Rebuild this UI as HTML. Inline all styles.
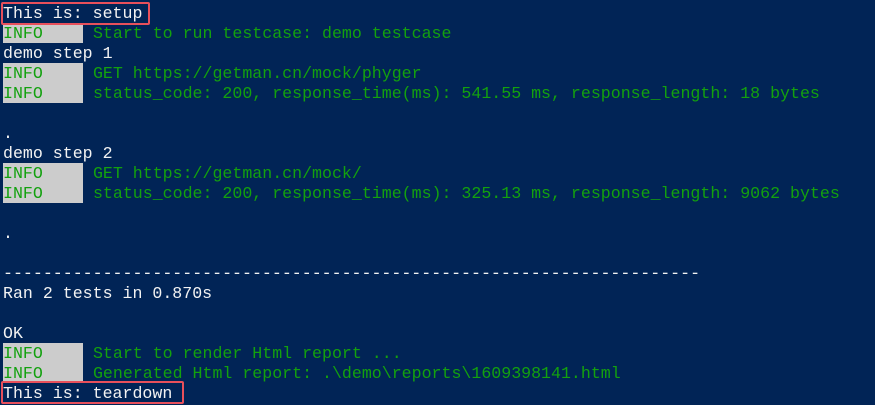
<!DOCTYPE html>
<html><head><meta charset="utf-8"><style>
html,body{margin:0;padding:0}
body{width:875px;height:405px;background:#012456;overflow:hidden;position:relative;font-family:"Liberation Mono",monospace;font-size:16.6px;color:#f2f2f2}
.l{position:absolute;left:3px;height:20px;line-height:21px;white-space:pre}
.g{color:#13a10e}
.i{display:inline-block;background:#cccccc;color:#13a10e;width:80px;height:20px;vertical-align:top}
.box{position:absolute;border:2px solid #e8505b;border-radius:2px;box-sizing:border-box}
</style></head><body>
<div class="l" style="top:3px">This is: setup</div>
<div class="l" style="top:23px"><span class="i">INFO</span><span class="g"> Start to run testcase: demo testcase</span></div>
<div class="l" style="top:43px">demo step 1</div>
<div class="l" style="top:63px"><span class="i">INFO</span><span class="g"> GET https://getman.cn/mock/phyger</span></div>
<div class="l" style="top:83px"><span class="i">INFO</span><span class="g"> status_code: 200, response_time(ms): 541.55 ms, response_length: 18 bytes</span></div>
<div class="l" style="top:123px">.</div>
<div class="l" style="top:143px">demo step 2</div>
<div class="l" style="top:163px"><span class="i">INFO</span><span class="g"> GET https://getman.cn/mock/</span></div>
<div class="l" style="top:183px"><span class="i">INFO</span><span class="g"> status_code: 200, response_time(ms): 325.13 ms, response_length: 9062 bytes</span></div>
<div class="l" style="top:223px">.</div>
<div class="l" style="top:263px">----------------------------------------------------------------------</div>
<div class="l" style="top:283px">Ran 2 tests in 0.870s</div>
<div class="l" style="top:323px">OK</div>
<div class="l" style="top:343px"><span class="i">INFO</span><span class="g"> Start to render Html report ...</span></div>
<div class="l" style="top:363px"><span class="i">INFO</span><span class="g"> Generated Html report: .\demo\reports\1609398141.html</span></div>
<div class="l" style="top:383px">This is: teardown</div>
<div class="box" style="left:1px;top:2px;width:149px;height:23px"></div>
<div class="box" style="left:1px;top:381px;width:183px;height:23px"></div>
</body></html>
